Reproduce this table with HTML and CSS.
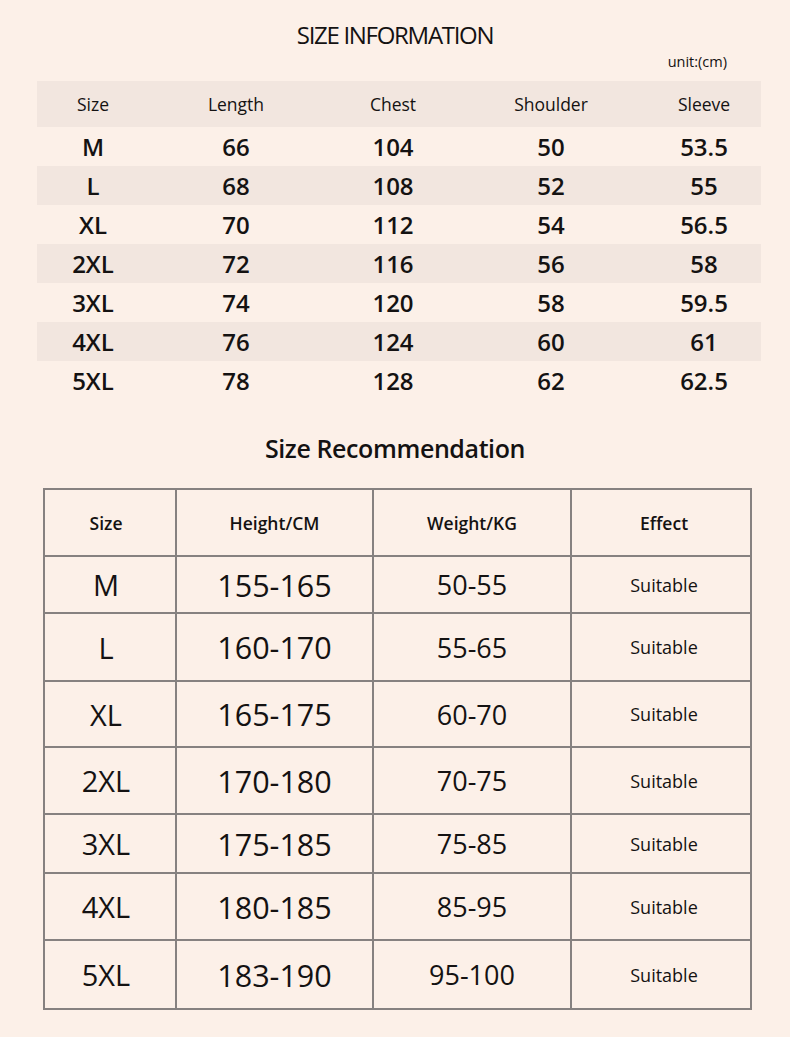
FILE: index.html
```html
<!DOCTYPE html>
<html lang="en">
<head>
<meta charset="utf-8">
<title>Size Information</title>
<link rel="stylesheet" href="styles.css">
</head>
<body>
<main class="page">
  <h1 class="title">SIZE INFORMATION</h1>
  <div class="unit">unit:(cm)</div>
  <section class="info">
    <div class="info-row info-head">
      <span>Size</span><span>Length</span><span>Chest</span><span>Shoulder</span><span>Sleeve</span>
    </div>
    <div class="info-row"><span>M</span><span>66</span><span>104</span><span>50</span><span>53.5</span></div>
    <div class="info-row band"><span>L</span><span>68</span><span>108</span><span>52</span><span>55</span></div>
    <div class="info-row"><span>XL</span><span>70</span><span>112</span><span>54</span><span>56.5</span></div>
    <div class="info-row band"><span>2XL</span><span>72</span><span>116</span><span>56</span><span>58</span></div>
    <div class="info-row"><span>3XL</span><span>74</span><span>120</span><span>58</span><span>59.5</span></div>
    <div class="info-row band"><span>4XL</span><span>76</span><span>124</span><span>60</span><span>61</span></div>
    <div class="info-row"><span>5XL</span><span>78</span><span>128</span><span>62</span><span>62.5</span></div>
  </section>

  <h2 class="subtitle">Size Recommendation</h2>
  <section class="rec">
    <div class="c head size-col">Size</div><div class="c head">Height/CM</div><div class="c head">Weight/KG</div><div class="c head effect-col">Effect</div>

    <div class="c size size-col">M</div><div class="c height">155-165</div><div class="c weight">50-55</div><div class="c effect effect-col">Suitable</div>
    <div class="c size size-col">L</div><div class="c height">160-170</div><div class="c weight">55-65</div><div class="c effect effect-col">Suitable</div>
    <div class="c size size-col">XL</div><div class="c height">165-175</div><div class="c weight">60-70</div><div class="c effect effect-col">Suitable</div>
    <div class="c size size-col">2XL</div><div class="c height">170-180</div><div class="c weight">70-75</div><div class="c effect effect-col">Suitable</div>
    <div class="c size size-col">3XL</div><div class="c height">175-185</div><div class="c weight">75-85</div><div class="c effect effect-col">Suitable</div>
    <div class="c size size-col">4XL</div><div class="c height">180-185</div><div class="c weight">85-95</div><div class="c effect effect-col">Suitable</div>
    <div class="c size size-col">5XL</div><div class="c height">183-190</div><div class="c weight">95-100</div><div class="c effect effect-col">Suitable</div>
  </section>
</main>
</body>
</html>
```

FILE: styles.css
```css
html, body {
  margin: 0;
  padding: 0;
  background: #fcf0e8;
}

.page {
  width: 790px;
  height: 1037px;
  background: #fcf0e8;
  color: #141212;
  font-family: "Open Sans", "Noto Sans", "Liberation Sans", sans-serif;
  overflow: hidden;
}

.title {
  margin: 0;
  padding-top: 20px;
  font-size: 24px;
  line-height: 30px;
  font-weight: 400;
  letter-spacing: -1.3px;
  text-align: center;
}

.unit {
  margin-top: 3px;
  height: 18px;
  font-size: 14.5px;
  line-height: 18px;
  text-align: right;
  padding-right: 63px;
  margin-bottom: 10px;
}

.info {
  margin-left: 37px;
  width: 724px;
}

.info-row {
  display: grid;
  grid-template-columns: 112px 174px 140px 176px 122px;
  height: 39px;
  align-items: center;
  text-align: center;
  font-size: 24px;
  font-weight: 600;
}

.info-row span:last-child {
  padding-left: 8px;
}

.info-head {
  height: 46px;
  background: #f2e6df;
  font-size: 17.5px;
  font-weight: 400;
}

.info-row.band {
  background: #f2e6df;
}

.subtitle {
  margin: 32px 0 0;
  font-size: 25px;
  line-height: 32px;
  font-weight: 600;
  text-align: center;
  letter-spacing: -0.4px;
}

.rec {
  margin: 24px 0 0 43px;
  width: 707px;
  display: grid;
  grid-template-columns: 132px 197px 198px 180px;
  grid-template-rows: 67px 57px 68px 66px 67px 59px 67px 69px;
  border-left: 2px solid #868180;
  border-top: 2px solid #868180;
}

.c {
  border-right: 2px solid #868180;
  border-bottom: 2px solid #868180;
  display: flex;
  align-items: center;
  justify-content: center;
}

.size-col {
  padding-right: 8px;
}

.effect-col {
  padding-left: 6px;
}

.head {
  font-size: 17.5px;
  font-weight: 600;
}

.size {
  font-size: 29px;
  font-weight: 400;
}

.height {
  font-size: 30.5px;
  font-weight: 500;
}

.weight {
  font-size: 27px;
  font-weight: 400;
}

.effect {
  font-size: 18px;
  font-weight: 400;
}
```
